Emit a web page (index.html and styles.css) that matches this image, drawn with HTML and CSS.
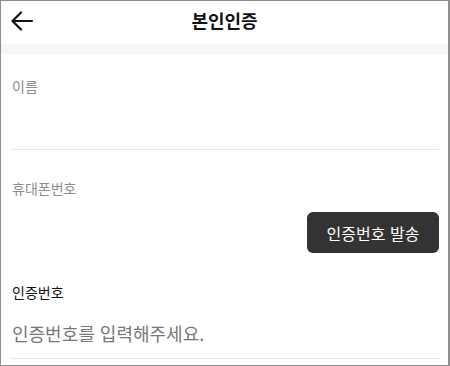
FILE: index.html
```html
<!DOCTYPE html>
<html lang="ko">
<head>
<meta charset="utf-8">
<title>본인인증</title>
<link rel="stylesheet" href="styles.css">
</head>
<body>
<div class="screen">
  <header class="header">
    <button class="back" aria-label="뒤로">
      <svg width="22" height="20" viewBox="0 0 22 20" fill="none" stroke="#111" stroke-width="2.2" stroke-linecap="round" stroke-linejoin="round">
        <path d="M21 10H2"/>
        <path d="M10 1.5L1.5 10L10 18.5"/>
      </svg>
    </button>
    <h1 class="title">본인인증</h1>
    <span class="spacer"></span>
  </header>
  <div class="band"></div>
  <main class="form">
    <div class="field field-name">
      <label class="label">이름</label>
      <div class="input-area"></div>
    </div>
    <div class="field field-phone">
      <label class="label">휴대폰번호</label>
      <div class="phone-row">
        <button class="send">인증번호 발송</button>
      </div>
    </div>
    <div class="field field-code">
      <label class="label label-dark">인증번호</label>
      <div class="placeholder">인증번호를 입력해주세요.</div>
    </div>
  </main>
</div>
</body>
</html>
```
FILE: styles.css
```css
* { box-sizing: border-box; }
html, body {
  margin: 0;
  padding: 0;
  background: #fff;
}
body {
  font-family: "Noto Sans CJK KR", "Noto Sans", sans-serif;
}
.screen {
  width: 450px;
  height: 366px;
  border: 1px solid #8e8e8e;
  border-right-width: 2px;
  overflow: hidden;
  background: #fff;
}
.header {
  height: 43px;
  display: grid;
  grid-template-columns: 60px 1fr 60px;
  align-items: center;
}
.back {
  border: 0;
  background: none;
  padding: 0 0 0 10px;
  margin: 0;
  height: 43px;
  display: flex;
  align-items: center;
  justify-content: flex-start;
  margin-top: -4px;
}
.back svg { display: block; }
.title {
  margin: 0;
  text-align: center;
  font-size: 18px;
  font-weight: 700;
  color: #111;
  line-height: 24px;
  margin-top: -6px;
}
.band {
  height: 10px;
  background: #f5f6f8;
}
.form {
  padding: 0 9px 0 9px;
}
.field {
  border-bottom: 1.5px solid #e6e6e6;
}
.label {
  display: block;
  font-size: 14px;
  line-height: 20px;
  color: #8c8c8c;
  padding-left: 2px;
}
.field-name .label { margin-top: 22px; }
.field-name .input-area { height: 53px; }
.field-phone {
  border-bottom: 0;
}
.field-phone .label { margin-top: 28px; }
.phone-row {
  display: flex;
  justify-content: flex-end;
  margin-top: 14px;
}
.send {
  width: 132px;
  height: 41px;
  border: 0;
  border-radius: 6px;
  background: #333333;
  color: #fff;
  font-family: inherit;
  font-size: 16px;
  font-weight: 400;
  padding: 0;
}
.field-code .label { margin-top: 29px; }
.label-dark {
  color: #111;
  font-weight: 400;
}
.placeholder {
  padding-left: 2px;
  margin-top: 18px;
  font-size: 18px;
  line-height: 26px;
  color: #777;
  height: 38px;
}
```
